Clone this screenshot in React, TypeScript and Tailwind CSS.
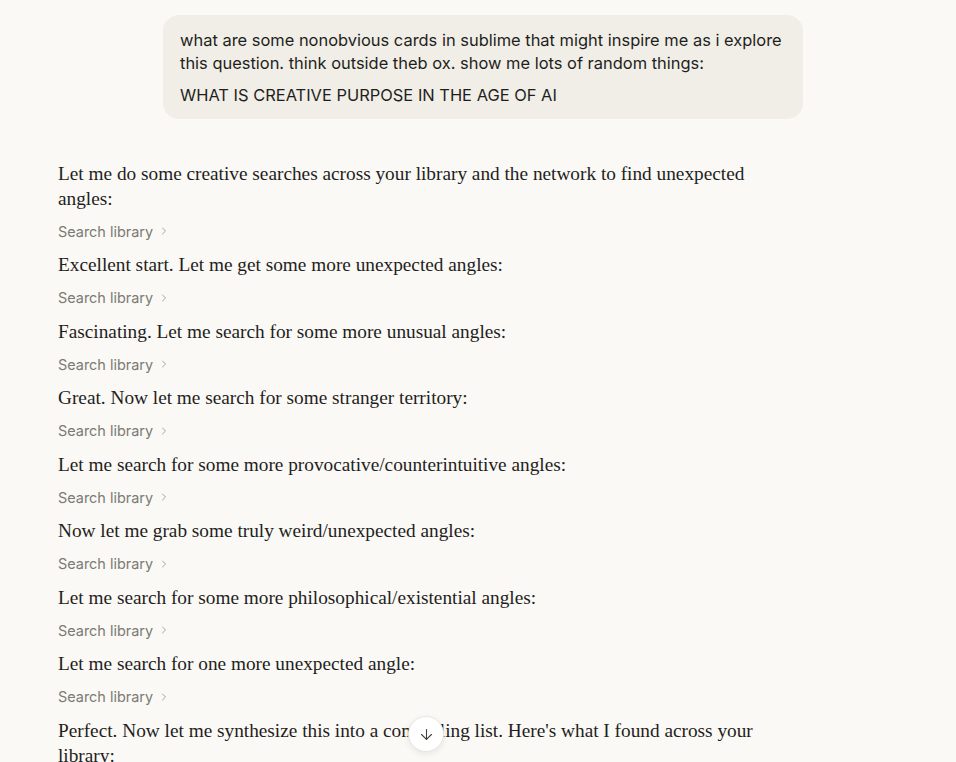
import React from 'react';
import { ChevronRight, ArrowDown } from 'lucide-react';

const steps = [
    'Let me do some creative searches across your library and the network to find unexpected angles:',
    'Excellent start. Let me get some more unexpected angles:',
    'Fascinating. Let me search for some more unusual angles:',
    'Great. Now let me search for some stranger territory:',
    'Let me search for some more provocative/counterintuitive angles:',
    'Now let me grab some truly weird/unexpected angles:',
    'Let me search for some more philosophical/existential angles:',
    'Let me search for one more unexpected angle:',
];

const SearchLibrary: React.FC = () => (
    <button className="mt-[10.5px] mb-[11px] flex h-[20px] items-center gap-[5px] text-[14.45px] text-[#7b7a74] font-['Inter',sans-serif]">
        <span>Search library</span>
        <ChevronRight size={12} strokeWidth={1.5} className="text-[#8a8984]" />
    </button>
);

export default function App() {
    return (
        <div className="relative h-[762px] overflow-hidden bg-[#faf9f5]">
            <div className="w-[745px] pl-[58px] box-content pt-[15px]">
                {/* User message */}
                <div className="flex justify-end">
                    <div className="w-[640px] rounded-[16px] bg-[#f0eee6] px-[17px] pt-[13.5px] pb-[12.5px] font-['Inter',sans-serif] text-[16.45px] leading-[23px] text-[#1f1e1d]">
                        <p>what are some nonobvious cards in sublime that might inspire me as i explore this question. think outside theb ox. show me lots of random things:</p>
                        <p className="mt-[9px]">WHAT IS CREATIVE PURPOSE IN THE AGE OF AI</p>
                    </div>
                </div>

                {/* Assistant response */}
                <div className="mt-[41.5px] font-['Liberation_Serif',serif] text-[19.3px] leading-[25px] text-[#1f1e1d]">
                    {steps.map((s, i) => (
                        <div key={i}>
                            <p>{s}</p>
                            <SearchLibrary />
                        </div>
                    ))}
                    <p>Perfect. Now let me synthesize this into a compelling list. Here's what I found across your library:</p>
                </div>
            </div>

            {/* Scroll to bottom */}
            <button className="absolute left-[408px] top-[716px] flex h-[36px] w-[36px] items-center justify-center rounded-full border border-[#e8e6df] bg-white shadow-[0_2px_6px_rgba(0,0,0,0.08)]">
                <ArrowDown size={17} strokeWidth={1.5} className="text-[#3d3d3a]" />
            </button>
        </div>
    );
}
